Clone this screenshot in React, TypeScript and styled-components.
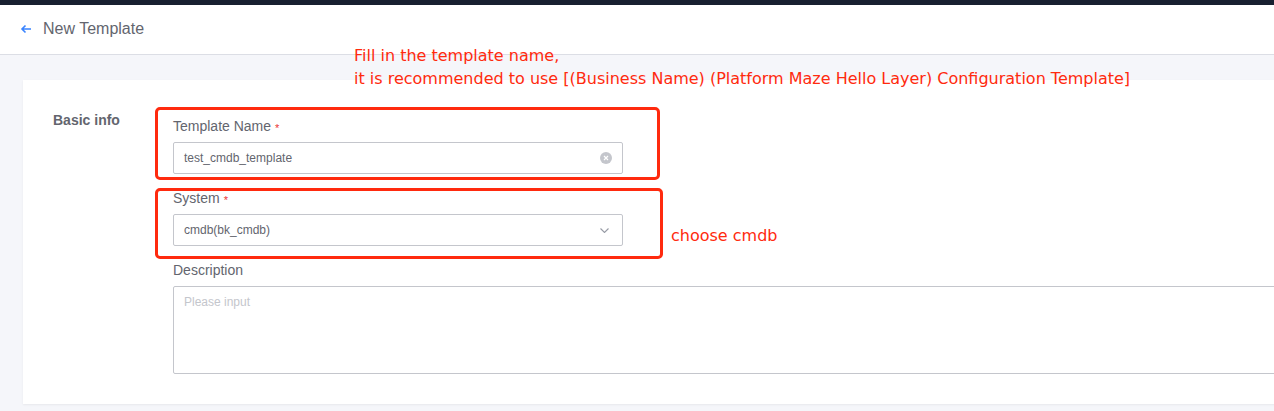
import React from "react";
import styled, { createGlobalStyle } from "styled-components";

const Global = createGlobalStyle`
  html, body { margin: 0; padding: 0; background: #f5f6fa; overflow: hidden; }
  body { font-family: "Liberation Sans", Arial, sans-serif; }
  * { box-sizing: border-box; }
`;

const Page = styled.div`
  position: relative;
  width: 1274px;
  height: 411px;
  overflow: hidden;
  background: #f5f6fa;
`;

const TopBar = styled.div`
  height: 5px;
  background: #182030;
`;

const Header = styled.header`
  height: 50px;
  background: #fff;
  border-bottom: 1px solid #dcdee5;
  display: flex;
  align-items: center;
  padding: 0 0 2px 20px;
  gap: 11px;
`;

const Title = styled.h1`
  margin: 0;
  font-size: 16px;
  font-weight: 400;
  color: #63656e;
`;

const Main = styled.main`
  padding: 25px 0 0 23px;
`;

const Card = styled.section`
  width: 1300px;
  height: 324px;
  background: #fff;
  box-shadow: 0 1px 2px rgba(0, 0, 0, 0.06);
  display: grid;
  grid-template-columns: 120px 1fr;
  padding: 30px 0 0 30px;
`;

const SectionTitle = styled.div`
  font-size: 14px;
  font-weight: 700;
  color: #63656e;
  line-height: 20px;
`;

const Fields = styled.div`
  display: flex;
  flex-direction: column;
  gap: 14px;
  padding-top: 6px;
`;

const Item = styled.div`
  position: relative;
`;

const Label = styled.div`
  font-size: 14px;
  line-height: 20px;
  height: 20px;
  color: #63656e;
  margin-bottom: 6px;
  display: flex;
  align-items: center;
`;

const Star = styled.span`
  color: #ea3636;
  font-size: 11px;
  line-height: 11px;
  margin-left: 4px;
  padding-top: 5px;
`;

const Control = styled.div<{ $width?: string; $height?: number }>`
  width: ${(p) => p.$width ?? "450px"};
  height: ${(p) => p.$height ?? 32}px;
  border: 1px solid #c4c6cc;
  border-radius: 2px;
  background: #fff;
  display: flex;
  align-items: ${(p) => ((p.$height ?? 32) > 32 ? "flex-start" : "center")};
  padding: ${(p) => ((p.$height ?? 32) > 32 ? "5px 10px" : "0 10px")};
  font-size: 12px;
  color: #63656e;
`;

const Value = styled.span<{ $placeholder?: boolean }>`
  flex: 1;
  color: ${(p) => (p.$placeholder ? "#c4c6cc" : "#63656e")};
  line-height: 20px;
`;

const ClearIcon = styled.span`
  width: 12px;
  height: 12px;
  border-radius: 50%;
  background: #c4c6cc;
  display: flex;
  align-items: center;
  justify-content: center;
`;

const RedBox = styled.div<{ $t: number; $l: number; $w: number; $h: number }>`
  position: absolute;
  top: ${(p) => p.$t}px;
  left: ${(p) => p.$l}px;
  width: ${(p) => p.$w}px;
  height: ${(p) => p.$h}px;
  border: 3px solid #ff2a0e;
  border-radius: 5px;
  pointer-events: none;
`;

const Note = styled.div<{ $t: number; $l: number }>`
  position: absolute;
  top: ${(p) => p.$t}px;
  left: ${(p) => p.$l}px;
  color: #ff2a0e;
  font-family: "DejaVu Sans", "Liberation Sans", sans-serif;
  font-size: 16px;
  line-height: 23px;
  white-space: nowrap;
`;

export default function App() {
  return (
    <Page>
      <Global />
      <TopBar />
      <Header>
        <svg width="12" height="10" viewBox="0 0 12 10">
          <path d="M11 5H2M5.5 1.5L2 5l3.5 3.5" stroke="#3a84ff" strokeWidth="1.6" fill="none" />
        </svg>
        <Title>New Template</Title>
      </Header>
      <Main>
        <Card>
          <SectionTitle>Basic info</SectionTitle>
          <Fields>
            <Item>
              <Label>
                Template Name<Star>*</Star>
              </Label>
              <Control>
                <Value>test_cmdb_template</Value>
                <ClearIcon>
                  <svg width="6" height="6" viewBox="0 0 6 6">
                    <path d="M1 1l4 4M5 1L1 5" stroke="#fff" strokeWidth="1.2" />
                  </svg>
                </ClearIcon>
              </Control>
              <RedBox $t={-9} $l={-18} $w={505} $h={73} />
            </Item>
            <Item>
              <Label>
                System<Star>*</Star>
              </Label>
              <Control>
                <Value>cmdb(bk_cmdb)</Value>
                <svg width="9" height="5" viewBox="0 0 9 5" style={{ marginRight: 3 }}>
                  <path d="M0.5 0.5l4 4 4-4" stroke="#979ba5" strokeWidth="1.1" fill="none" />
                </svg>
              </Control>
              <RedBox $t={0} $l={-18} $w={508} $h={71} />
            </Item>
            <Item>
              <Label>Description</Label>
              <Control $width="1200px" $height={88}>
                <Value $placeholder>Please input</Value>
              </Control>
            </Item>
          </Fields>
        </Card>
      </Main>
      <Note $t={44} $l={354}>
        Fill in the template name,
        <br />
        it is recommended to use [(Business Name) (Platform Maze Hello Layer) Configuration Template]
      </Note>
      <Note $t={224} $l={671}>choose cmdb</Note>
    </Page>
  );
}
